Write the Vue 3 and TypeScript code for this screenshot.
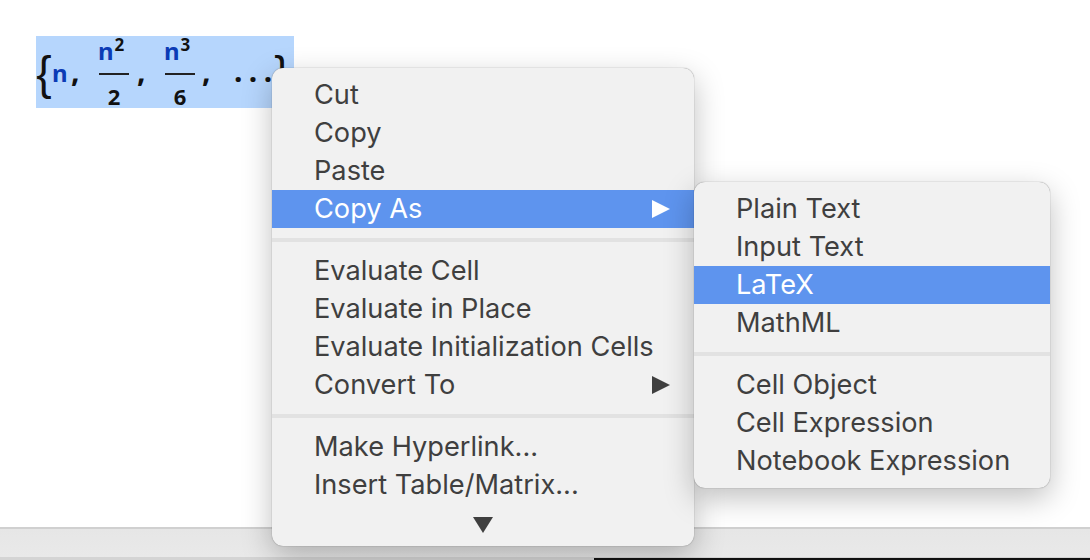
<template>
  <div class="page">
    <div class="canvas">
      <div class="selection">
        <span class="brace">{</span>
        <span class="sym first">n</span>
        <span class="comma c1">,</span>
        <span class="frac">
          <span class="num"><span class="sym">n</span><span class="power">2</span></span>
          <span class="den">2</span>
        </span>
        <span class="comma c2">,</span>
        <span class="frac">
          <span class="num"><span class="sym">n</span><span class="power">3</span></span>
          <span class="den">6</span>
        </span>
        <span class="comma c3">,</span>
        <span class="dots">...</span>
        <span class="brace close">}</span>
      </div>
    </div>
    <div class="status"></div>
    <div class="strip"><div class="strip-dark"></div></div>

    <div class="menu main-menu">
      <template v-for="(group, i) in mainMenu" :key="i">
        <div v-if="i" class="sep"></div>
        <div v-for="item in group" :key="item.label" class="item" :class="{ active: item.active }">
          <span>{{ item.label }}</span>
          <span v-if="item.sub" class="arrow"></span>
        </div>
      </template>
      <div class="more"><span class="down"></span></div>
    </div>

    <div class="menu sub-menu">
      <template v-for="(group, i) in subMenu" :key="i">
        <div v-if="i" class="sep"></div>
        <div v-for="item in group" :key="item.label" class="item" :class="{ active: item.active }">
          <span>{{ item.label }}</span>
        </div>
      </template>
    </div>
  </div>
</template>

<script setup lang="ts">
interface Item {
  label: string
  active?: boolean
  sub?: boolean
}

const mainMenu: Item[][] = [
  [{ label: 'Cut' }, { label: 'Copy' }, { label: 'Paste' }, { label: 'Copy As', active: true, sub: true }],
  [
    { label: 'Evaluate Cell' },
    { label: 'Evaluate in Place' },
    { label: 'Evaluate Initialization Cells' },
    { label: 'Convert To', sub: true }
  ],
  [{ label: 'Make Hyperlink...' }, { label: 'Insert Table/Matrix...' }]
]

const subMenu: Item[][] = [
  [{ label: 'Plain Text' }, { label: 'Input Text' }, { label: 'LaTeX', active: true }, { label: 'MathML' }],
  [{ label: 'Cell Object' }, { label: 'Cell Expression' }, { label: 'Notebook Expression' }]
]
</script>

<style>
html,
body {
  margin: 0;
  background: #fff;
}
</style>

<style scoped>
.page {
  position: relative;
  width: 1090px;
  height: 560px;
  overflow: hidden;
  display: flex;
  flex-direction: column;
  background: #fff;
  font-family: Inter, 'Liberation Sans', sans-serif;
}
.canvas {
  flex: 1;
  padding: 36px 0 0 36px;
}
.selection {
  width: 258px;
  height: 72px;
  background: #b6d6fd;
  display: flex;
  align-items: flex-start;
  color: #111;
  font-family: 'Noto Sans', sans-serif;
  font-weight: 700;
  font-size: 24px;
  line-height: 24px;
}
.brace {
  font-family: 'Liberation Sans', sans-serif;
  font-weight: 400;
  font-size: 46px;
  line-height: 46px;
  width: 16px;
  margin-top: 14px;
  text-align: center;
  color: #111;
}
.close {
  margin-left: -2px;
}
.sym {
  color: #0b3bb5;
}
.first {
  width: 19px;
  margin-top: 25px;
}
.comma {
  margin-top: 23px;
  font-size: 30px;
}
.c1 {
  width: 28px;
}
.c2 {
  width: 28px;
  padding-left: 8px;
}
.c3 {
  width: 32px;
  padding-left: 7px;
}
.frac {
  display: flex;
  flex-direction: column;
  width: 30px;
  margin-top: 3px;
}
.num {
  display: block;
  height: 34px;
  border-bottom: 2px solid #222;
  white-space: nowrap;
  text-indent: -1px;
}
.power {
  font-size: 17px;
  line-height: 0;
  vertical-align: 9px;
  margin-left: 1px;
  color: #111;
}
.den {
  margin-top: 10px;
  font-size: 22px;
  line-height: 22px;
  text-align: center;
}
.dots {
  width: 42px;
  margin-top: 23px;
  font-size: 30px;
  letter-spacing: 6.4px;
}
.status {
  height: 28px;
  background: linear-gradient(#e6e6e6, #e9e9e9);
  border-top: 2px solid #d0d0d0;
}
.strip {
  height: 3px;
  background: #d4d4d4;
  position: relative;
}
.strip-dark {
  position: absolute;
  left: 594px;
  right: 0;
  top: 1px;
  bottom: 0;
  background: #111;
}
.menu {
  position: absolute;
  box-sizing: border-box;
  padding: 8px 0;
  background: #f1f1f1;
  border-radius: 11px;
  color: #3f3f3f;
  font-size: 27.2px;
  box-shadow: 0 0 1px rgba(0, 0, 0, 0.55), 0 10px 30px rgba(0, 0, 0, 0.25);
}
.main-menu {
  left: 272px;
  top: 68px;
  width: 422px;
  height: 478px;
}
.sub-menu {
  left: 694px;
  top: 182px;
  width: 356px;
  height: 306px;
}
.item {
  box-sizing: border-box;
  height: 38px;
  padding: 0 24px 1px 42px;
  display: flex;
  align-items: center;
  justify-content: space-between;
  white-space: nowrap;
}
.active {
  background: #5e94ee;
  color: #fff;
}
.sep {
  height: 4px;
  margin: 10px 0;
  background: #e2e2e2;
}
.arrow {
  width: 0;
  height: 0;
  margin-top: 1px;
  border-left: 18px solid currentColor;
  border-top: 9px solid transparent;
  border-bottom: 9px solid transparent;
}
.more {
  box-sizing: border-box;
  height: 34px;
  padding-top: 8px;
  display: flex;
  align-items: center;
  justify-content: center;
}
.down {
  width: 0;
  height: 0;
  border-top: 16px solid #3f3f3f;
  border-left: 10px solid transparent;
  border-right: 10px solid transparent;
}
</style>
